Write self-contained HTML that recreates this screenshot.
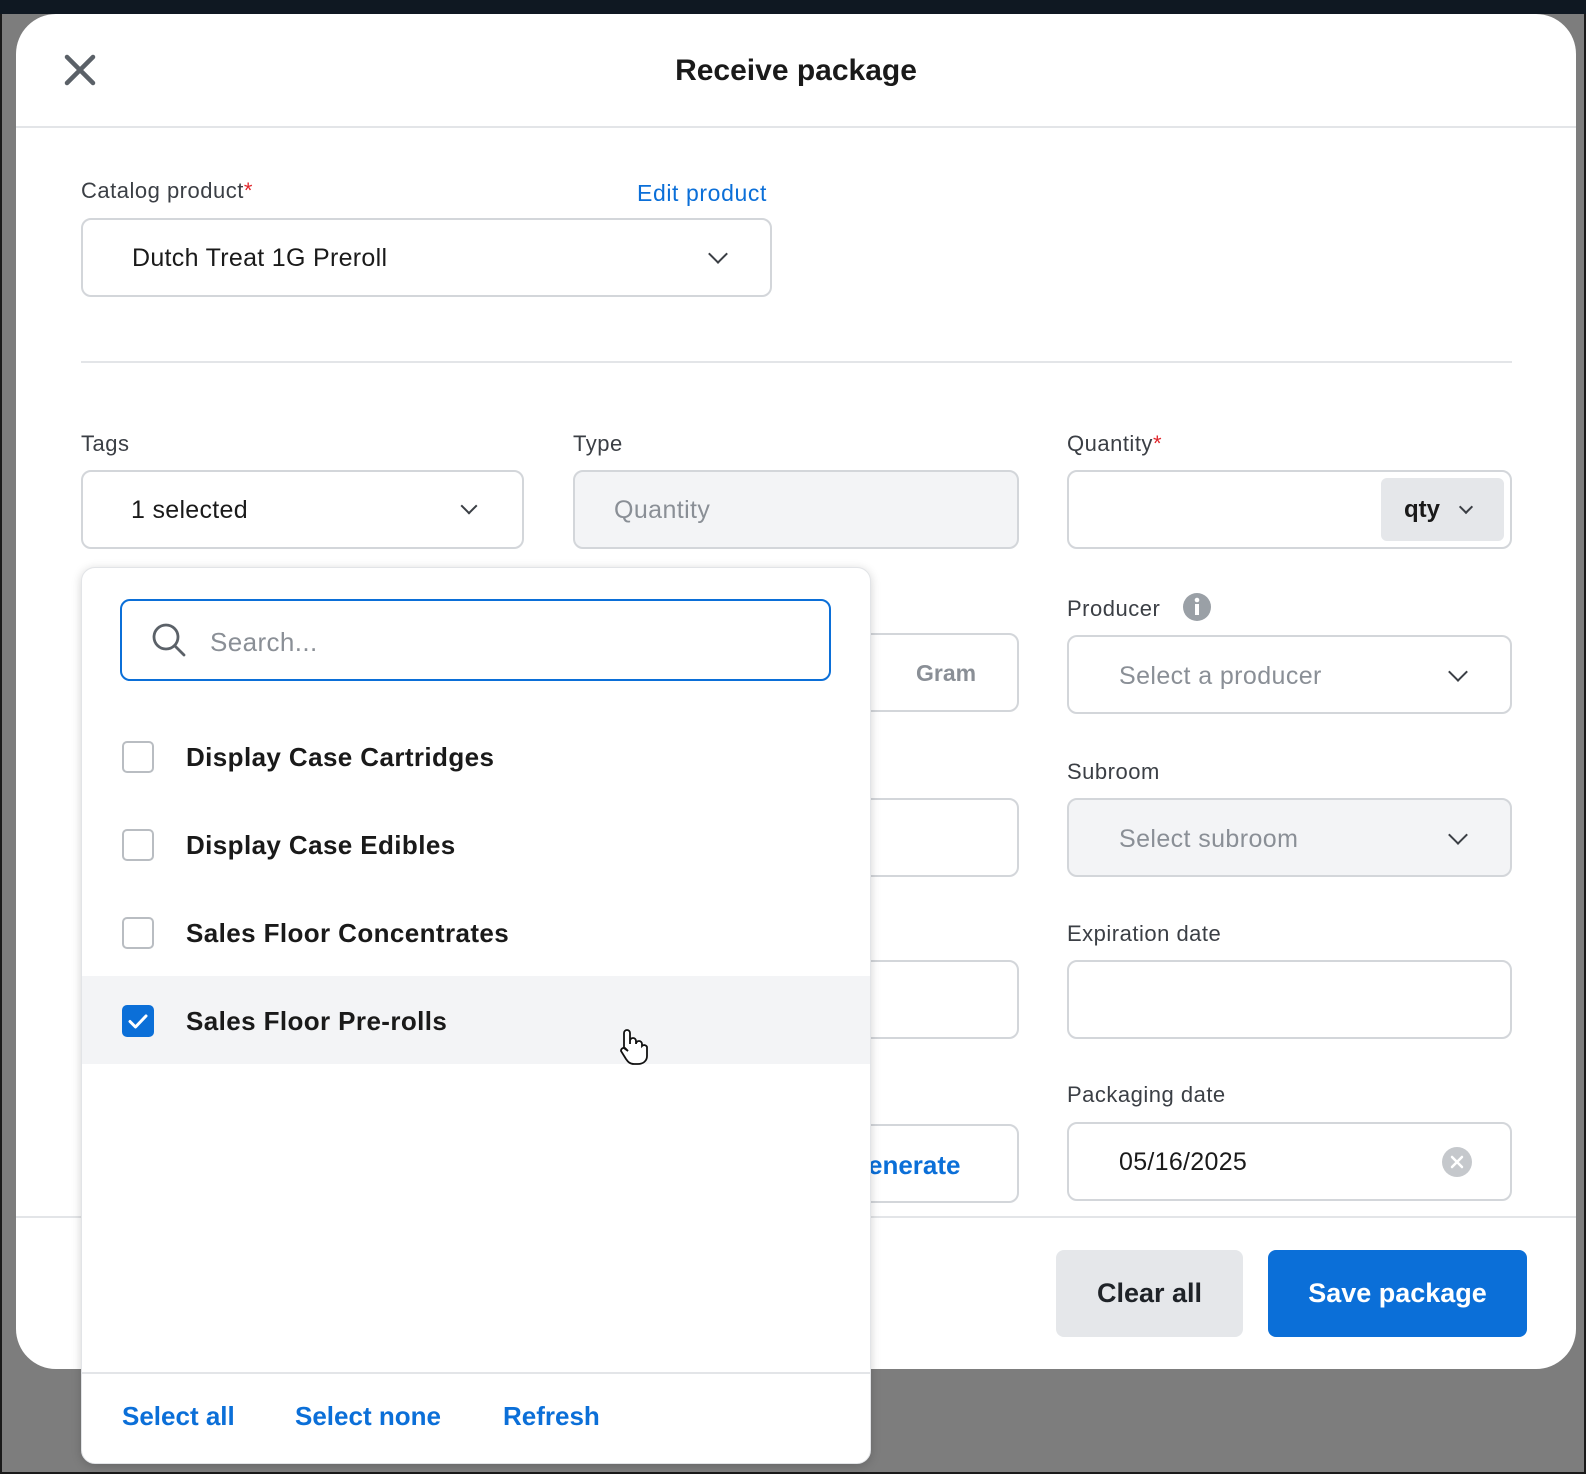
<!DOCTYPE html>
<html><head><meta charset="utf-8"><style>
*{box-sizing:border-box;margin:0;padding:0}
body{width:1586px;height:1474px;overflow:hidden;background:#7d7d7d;font-family:"Liberation Sans",sans-serif;position:relative;color:#1a1a1a}
.a{position:absolute}
.topbar{left:0;top:0;width:1586px;height:14px;background:#0f1822}
.modal{left:16px;top:14px;width:1560px;height:1355px;background:#fff;border-radius:40px}
.lbl{font-size:22px;color:#3b3f45;letter-spacing:0.5px}
.req{color:#e0262b}
.box{border:2px solid #d3d6da;border-radius:10px;background:#fff}
.txt{font-size:25px;letter-spacing:0.3px}
.ph{font-size:25px;color:#8a8f96;letter-spacing:0.4px}
.chev{width:14px;height:14px;border-right:2.5px solid #3b3f45;border-bottom:2.5px solid #3b3f45;transform:rotate(45deg)}
.blue{color:#0b6fd8}
.dd{left:81px;top:567px;width:790px;height:897px;background:#fff;border-radius:14px;box-shadow:0 2px 10px rgba(0,0,0,.18);border:1px solid #e2e4e7}
.cb{width:32px;height:32px;border:2px solid #b9bdc2;border-radius:5px;background:#fff}
.item{font-size:26px;font-weight:bold;color:#1a1a1a;letter-spacing:0.4px}
.btn{font-size:27px;font-weight:bold;border-radius:8px;display:flex;align-items:center;justify-content:center}
</style></head><body>
<div class="a topbar"></div>
<div class="a" style="left:0;top:14px;width:2px;height:1460px;background:#1a1a1a"></div>
<div class="a" style="right:0;top:14px;width:2px;height:1460px;background:#1a1a1a"></div>
<div class="a" style="left:0;bottom:0;width:1586px;height:2px;background:#1a1a1a"></div>
<div class="a modal"></div>
<svg class="a" style="left:64px;top:54px" width="32" height="32"><path d="M3 3L29 29M29 3L3 29" stroke="#5b6168" stroke-width="4.5" stroke-linecap="round"/></svg>
<div class="a" style="left:0;width:1592px;top:54px;text-align:center;font-size:30px;font-weight:bold">Receive package</div>
<div class="a" style="left:16px;top:126px;width:1560px;height:2px;background:#e3e5e8"></div>

<div class="a lbl" style="left:81px;top:178px">Catalog product<span class="req">*</span></div>
<div class="a blue" style="left:637px;top:180px;font-size:23px;letter-spacing:0.6px">Edit product</div>
<div class="a box" style="left:81px;top:218px;width:691px;height:79px"></div>
<div class="a txt" style="left:132px;top:244px">Dutch Treat 1G Preroll</div>
<div class="a chev" style="left:711px;top:247px"></div>
<div class="a" style="left:81px;top:361px;width:1431px;height:2px;background:#e3e5e8"></div>

<div class="a lbl" style="left:81px;top:431px">Tags</div>
<div class="a box" style="left:81px;top:470px;width:443px;height:79px"></div>
<div class="a txt" style="left:131px;top:496px">1 selected</div>
<div class="a chev" style="left:463px;top:500px;width:12px;height:12px"></div>

<div class="a lbl" style="left:573px;top:431px">Type</div>
<div class="a box" style="left:573px;top:470px;width:446px;height:79px;background:#f3f4f6"></div>
<div class="a ph" style="left:614px;top:496px">Quantity</div>

<div class="a lbl" style="left:1067px;top:431px">Quantity<span class="req">*</span></div>
<div class="a box" style="left:1067px;top:470px;width:445px;height:79px"></div>
<div class="a" style="left:1381px;top:478px;width:123px;height:63px;background:#e5e7ea;border-radius:6px"></div>
<div class="a" style="left:1404px;top:496px;font-size:24px;font-weight:bold">qty</div>
<div class="a chev" style="left:1461px;top:502px;width:10px;height:10px;border-width:2.5px"></div>

<div class="a box" style="left:860px;top:633px;width:159px;height:79px"></div>
<div class="a" style="left:916px;top:660px;font-size:23px;font-weight:bold;color:#8a8f96">Gram</div>
<div class="a box" style="left:860px;top:798px;width:159px;height:79px"></div>
<div class="a box" style="left:860px;top:960px;width:159px;height:79px"></div>
<div class="a box" style="left:860px;top:1124px;width:159px;height:79px"></div>
<div class="a blue" style="left:868px;top:1150px;font-size:26px;font-weight:bold">enerate</div>

<div class="a lbl" style="left:1067px;top:596px">Producer</div>
<svg class="a" style="left:1182px;top:592px" width="30" height="30"><circle cx="15" cy="15" r="14" fill="#9aa0a6"/><rect x="13" y="12" width="4" height="11" fill="#fff"/><circle cx="15" cy="8" r="2.3" fill="#fff"/></svg>
<div class="a box" style="left:1067px;top:635px;width:445px;height:79px"></div>
<div class="a ph" style="left:1119px;top:662px">Select a producer</div>
<div class="a chev" style="left:1451px;top:665px"></div>

<div class="a lbl" style="left:1067px;top:759px">Subroom</div>
<div class="a box" style="left:1067px;top:798px;width:445px;height:79px;background:#f3f4f6"></div>
<div class="a ph" style="left:1119px;top:825px">Select subroom</div>
<div class="a chev" style="left:1451px;top:828px"></div>

<div class="a lbl" style="left:1067px;top:921px">Expiration date</div>
<div class="a box" style="left:1067px;top:960px;width:445px;height:79px"></div>

<div class="a lbl" style="left:1067px;top:1082px">Packaging date</div>
<div class="a box" style="left:1067px;top:1122px;width:445px;height:79px"></div>
<div class="a txt" style="left:1119px;top:1148px">05/16/2025</div>
<svg class="a" style="left:1441px;top:1146px" width="32" height="32"><circle cx="16" cy="16" r="15" fill="#c5c8cc"/><path d="M11 11L21 21M21 11L11 21" stroke="#fff" stroke-width="2.5" stroke-linecap="round"/></svg>

<div class="a" style="left:16px;top:1216px;width:1560px;height:2px;background:#e3e5e8"></div>
<div class="a btn" style="left:1056px;top:1250px;width:187px;height:87px;background:#e5e7ea;color:#1f2328">Clear all</div>
<div class="a btn" style="left:1268px;top:1250px;width:259px;height:87px;background:#0b6fd8;color:#fff">Save package</div>

<div class="a dd"></div>
<div class="a" style="left:120px;top:599px;width:711px;height:82px;border:2px solid #0b6fd8;border-radius:10px"></div>
<svg class="a" style="left:151px;top:622px" width="36" height="36"><circle cx="15" cy="15" r="12" fill="none" stroke="#5b6168" stroke-width="2.8"/><path d="M24 24L33 33" stroke="#5b6168" stroke-width="2.8" stroke-linecap="round"/></svg>
<div class="a ph" style="left:210px;top:627px;font-size:26px">Search...</div>

<div class="a cb" style="left:122px;top:741px"></div>
<div class="a item" style="left:186px;top:742px">Display Case Cartridges</div>
<div class="a cb" style="left:122px;top:829px"></div>
<div class="a item" style="left:186px;top:830px">Display Case Edibles</div>
<div class="a cb" style="left:122px;top:917px"></div>
<div class="a item" style="left:186px;top:918px">Sales Floor Concentrates</div>
<div class="a" style="left:82px;top:976px;width:788px;height:88px;background:#f3f4f6"></div>
<svg class="a" style="left:122px;top:1005px" width="32" height="32"><rect width="32" height="32" rx="5" fill="#0b6fd8"/><path d="M8 16.5L13.5 22L24 11" stroke="#fff" stroke-width="3" fill="none" stroke-linecap="round" stroke-linejoin="round"/></svg>
<div class="a item" style="left:186px;top:1006px">Sales Floor Pre-rolls</div>
<svg class="a" style="left:614px;top:1028px" width="34" height="38"><path d="M10 20V5a3 3 0 016 0v11l0-3a3 3 0 016 0v3a3 3 0 016 0v2a3 3 0 015 1v9c0 5-4 8-9 8h-4c-4 0-6-2-8-5l-5-8a3 3 0 014-3l3 3z" fill="#fff" stroke="#111" stroke-width="1.8"/></svg>

<div class="a" style="left:82px;top:1372px;width:788px;height:2px;background:#e3e5e8"></div>
<div class="a blue" style="left:122px;top:1401px;font-size:26px;font-weight:bold">Select all</div>
<div class="a blue" style="left:295px;top:1401px;font-size:26px;font-weight:bold">Select none</div>
<div class="a blue" style="left:503px;top:1401px;font-size:26px;font-weight:bold">Refresh</div>
</body></html>
